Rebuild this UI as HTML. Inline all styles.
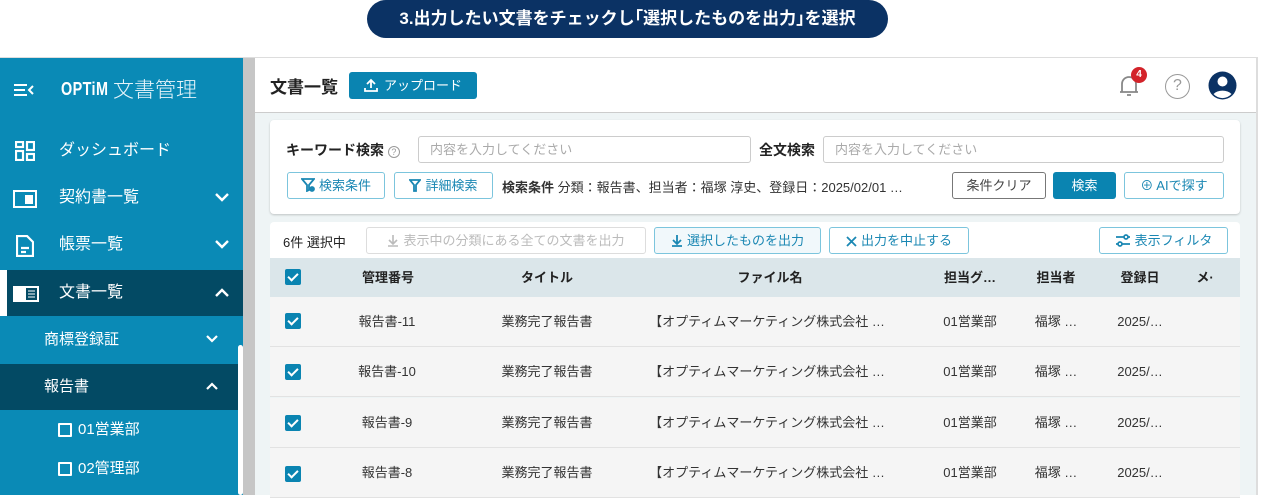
<!DOCTYPE html>
<html><head><meta charset="utf-8"><style>
*{box-sizing:border-box;margin:0;padding:0}
body{width:1261px;height:495px;overflow:hidden;background:#fff;font-family:"Liberation Sans","Noto Sans CJK JP",sans-serif;position:relative;color:#222}
.abs{position:absolute}
.banner{left:367px;top:0;width:521px;height:38px;background:#0b3264;border-radius:19px;color:#fff;font-size:17px;font-weight:bold;text-align:center;line-height:38px}
.frame{left:0;top:57px;width:1258px;height:438px;border-top:1px solid #ddd;border-right:2px solid #ddd;background:#eef4f5}
.side{left:0;top:58px;width:243px;height:437px;background:#0a8ab6;color:#fff}
.sb{left:243px;top:58px;width:12px;height:437px;background:#c6c6c6}
.thumb{left:238px;top:345px;width:5px;height:150px;background:#fff;border-radius:3px}
.nav{position:absolute;left:0;width:243px;height:46px;font-size:16px;line-height:46px}
.nav .t{position:absolute;left:59px}
.chev{position:absolute;right:14px;top:18px}
.hdr{left:255px;top:58px;width:1001px;height:55px;background:#fff;border-bottom:1px solid #ccc}
.btn{position:absolute;border:1px solid #7cc5dd;border-radius:3px;background:#fff;color:#1a87b3;font-size:13px;text-align:center;white-space:nowrap}
.btn svg{vertical-align:-2px;margin-right:4px}
.card{background:#fff;border-radius:4px;box-shadow:0 1px 2px rgba(0,0,0,.2)}
.inp{position:absolute;border:1px solid #ccc;border-radius:3px;height:27px;color:#aaa;font-size:13px;line-height:25px;padding-left:11px;background:#fff}
.row{position:absolute;left:270px;width:970px;height:50px;background:#f5f5f5;border-bottom:1px solid #e2e2e2;font-size:13px;color:#333}
.row span,.th span{position:absolute;transform:translateX(-50%);white-space:nowrap}
.cb{position:absolute;left:285px;width:16px;height:16px;background:#0a84b1;border-radius:2px}
.cb:after{content:"";position:absolute;left:5px;top:2px;width:4px;height:8px;border:solid #fff;border-width:0 2px 2px 0;transform:rotate(45deg)}
</style></head><body>
<div class="abs banner">3.出力したい文書をチェックし｢選択したものを出力｣を選択</div>
<div class="abs frame"></div>
<div class="abs side">
 <svg class="abs" style="left:14px;top:26px" width="20" height="12" viewBox="0 0 20 12" fill="none" stroke="#fff" stroke-width="2"><path d="M0 1h13M0 6h11M0 11h13M19 2l-4 4 4 4"/></svg>
 <div class="abs" style="left:61px;top:21px;font-size:18px;font-weight:bold;transform:scaleX(.8);transform-origin:left;letter-spacing:0.5px">OPTiM</div>
 <div class="abs" style="left:113px;top:16px;font-size:21px;font-weight:300;color:#e6f4fa">文書管理</div>
 <div class="nav" style="top:70px"><svg class="abs" style="left:15px;top:13px" width="20" height="20" viewBox="0 0 20 20" fill="none" stroke="#fff" stroke-width="2.2"><rect x="1" y="1" width="7" height="5"/><rect x="12" y="1" width="7" height="8"/><rect x="1" y="10" width="7" height="9"/><rect x="12" y="13" width="7" height="6"/></svg><span class="t">ダッシュボード</span></div>
 <div class="nav" style="top:117px"><svg class="abs" style="left:13px;top:15px" width="24" height="18" viewBox="0 0 24 18"><rect x="1" y="1" width="22" height="16" fill="none" stroke="#fff" stroke-width="2"/><rect x="12" y="5" width="8" height="9" fill="#fff"/></svg><span class="t">契約書一覧</span><svg class="chev" width="14" height="9" viewBox="0 0 14 9" fill="none" stroke="#fff" stroke-width="2.4"><path d="M1 1l6 6 6-6"/></svg></div>
 <div class="nav" style="top:164px"><svg class="abs" style="left:16px;top:13px" width="18" height="22" viewBox="0 0 18 22" fill="none" stroke="#fff" stroke-width="2.2"><path d="M1 1h10l6 6v14H1z"/><path d="M5 13h8M5 17h5"/></svg><span class="t">帳票一覧</span><svg class="chev" width="14" height="9" viewBox="0 0 14 9" fill="none" stroke="#fff" stroke-width="2.4"><path d="M1 1l6 6 6-6"/></svg></div>
 <div class="nav" style="top:212px;background:#034a64;border-left:7px solid #fff"><svg class="abs" style="left:5px;top:15px" width="28" height="18" viewBox="0 0 28 18"><rect x="1" y="1" width="26" height="16" fill="#fff"/><rect x="14" y="3" width="11" height="12" fill="#034a64"/><path d="M16 6h7M16 9h7M16 12h7" stroke="#fff"/></svg><span class="t" style="left:52px">文書一覧</span><svg class="chev" width="14" height="9" viewBox="0 0 14 9" fill="none" stroke="#fff" stroke-width="2.4"><path d="M1 8l6-6 6 6"/></svg></div>
 <div class="nav" style="top:259px;font-size:15px"><span class="t" style="left:44px">商標登録証</span><svg class="chev" style="right:25px" width="12" height="8" viewBox="0 0 12 8" fill="none" stroke="#fff" stroke-width="2.2"><path d="M1 1l5 5 5-5"/></svg></div>
 <div class="nav" style="top:306px;font-size:15px;background:#034a64;width:238px"><span class="t" style="left:44px">報告書</span><svg class="chev" style="right:20px" width="12" height="8" viewBox="0 0 12 8" fill="none" stroke="#fff" stroke-width="2.2"><path d="M1 7l5-5 5 5"/></svg></div>
 <div class="nav" style="top:349px;font-size:15px"><span class="abs" style="left:58px;top:16px;width:14px;height:14px;border:2px solid #fff;border-radius:1px"></span><span class="t" style="left:78px">01営業部</span></div>
 <div class="nav" style="top:388px;font-size:15px"><span class="abs" style="left:58px;top:16px;width:14px;height:14px;border:2px solid #fff;border-radius:1px"></span><span class="t" style="left:78px">02管理部</span></div>
</div>
<div class="abs sb"></div><div class="abs thumb"></div>
<div class="abs hdr">
 <div class="abs" style="left:15px;top:15px;font-size:17px;font-weight:bold">文書一覧</div>
 <div class="abs" style="left:94px;top:14px;width:128px;height:27px;background:#0a84b1;border-radius:3px;color:#fff;font-size:13px;line-height:27px;text-align:center"><svg width="14" height="14" viewBox="0 0 14 14" fill="none" stroke="#fff" stroke-width="1.8" style="vertical-align:-2px;margin-right:6px"><path d="M7 10V2M3 6l4-4 4 4M1 10v3h12v-3"/></svg>アップロード</div>
 <svg class="abs" style="left:863px;top:16px" width="22" height="24" viewBox="0 0 22 24" fill="none" stroke="#888" stroke-width="1.8"><path d="M4 18V10a7 7 0 0114 0v8zM2 18h18M9 21h4"/></svg>
 <div class="abs" style="left:876px;top:9px;width:16px;height:16px;border-radius:8px;background:#d3232a;color:#fff;font-size:10px;text-align:center;line-height:16px;font-weight:bold">4</div>
 <div class="abs" style="left:910px;top:16px;width:25px;height:25px;border:1.5px solid #999;border-radius:50%;color:#999;font-size:16px;text-align:center;line-height:22px">?</div>
 <svg class="abs" style="left:953px;top:13px" width="29" height="29" viewBox="0 0 29 29"><circle cx="14.5" cy="14.5" r="14" fill="#0b3264"/><circle cx="14.5" cy="10.5" r="5" fill="#fff"/><path d="M5.5 23a11 8 0 0118 0a12 12 0 01-18 0z" fill="#fff"/></svg>
</div>
<div class="abs card" style="left:270px;top:120px;width:970px;height:94px">
 <div class="abs" style="left:16px;top:20px;font-size:14px;font-weight:bold">キーワード検索 <span style="display:inline-block;width:12px;height:12px;border:1px solid #999;border-radius:50%;color:#999;font-weight:normal;font-size:9px;line-height:10px;text-align:center;vertical-align:0">?</span></div>
 <div class="inp" style="left:148px;top:16px;width:333px">内容を入力してください</div>
 <div class="abs" style="left:489px;top:20px;font-size:14px;font-weight:bold">全文検索</div>
 <div class="inp" style="left:553px;top:16px;width:401px">内容を入力してください</div>
 <div class="btn" style="left:17px;top:52px;width:98px;height:27px;line-height:25px"><svg width="14" height="14" viewBox="0 0 14 14" fill="none" stroke="#1a87b3" stroke-width="1.8"><path d="M1 1h12L8 7v5L6 13V7z"/><circle cx="11" cy="11" r="2" fill="#1a87b3"/></svg>検索条件</div>
 <div class="btn" style="left:124px;top:52px;width:99px;height:27px;line-height:25px"><svg width="12" height="13" viewBox="0 0 12 13" fill="none" stroke="#1a87b3" stroke-width="1.8"><path d="M1 1h10L7 6v6L5 12V6z"/></svg>詳細検索</div>
 <div class="abs" style="left:232px;top:57px;font-size:13px;color:#333;white-space:nowrap"><b>検索条件</b> 分類：報告書、担当者：福塚 淳史、登録日：2025/02/01 …</div>
 <div class="btn" style="left:682px;top:52px;width:94px;height:27px;line-height:25px;border:1.5px solid #777;color:#444">条件クリア</div>
 <div class="btn" style="left:783px;top:52px;width:63px;height:27px;line-height:27px;border:0;background:#0a84b1;color:#fff">検索</div>
 <div class="btn" style="left:854px;top:52px;width:100px;height:27px;line-height:25px">⊕ AIで探す</div>
</div>
<div class="abs" style="left:270px;top:222px;width:970px;height:36px;background:#fff;border-radius:4px 4px 0 0">
 <div class="abs" style="left:13px;top:10px;font-size:13px">6件 選択中</div>
 <div class="btn" style="left:96px;top:5px;width:280px;height:27px;line-height:25px;border-color:#ddd;color:#bbb"><svg width="12" height="13" viewBox="0 0 12 13" fill="none" stroke="#bbb" stroke-width="1.6"><path d="M6 1v8M2 6l4 4 4-4M1 12h10"/></svg>表示中の分類にある全ての文書を出力</div>
 <div class="btn" style="left:384px;top:5px;width:167px;height:27px;line-height:25px;background:#f1f8fb"><svg width="12" height="13" viewBox="0 0 12 13" fill="none" stroke="#1a87b3" stroke-width="1.8"><path d="M6 1v8M2 6l4 4 4-4M1 12h10"/></svg>選択したものを出力</div>
 <div class="btn" style="left:559px;top:5px;width:140px;height:27px;line-height:25px"><svg width="11" height="11" viewBox="0 0 11 11" fill="none" stroke="#1a87b3" stroke-width="1.8"><path d="M1 1l9 9M10 1l-9 9"/></svg>出力を中止する</div>
 <div class="btn" style="left:829px;top:5px;width:129px;height:27px;line-height:25px"><svg width="16" height="13" viewBox="0 0 16 13" fill="none" stroke="#1a87b3" stroke-width="1.7"><path d="M1 3h8M13 3h2M1 10h2M7 10h8"/><circle cx="11" cy="3" r="2"/><circle cx="5" cy="10" r="2"/></svg>表示フィルタ</div>
</div>
<div class="abs th" style="left:270px;top:258px;width:970px;height:39px;background:#dbe6ea;font-size:13px;font-weight:bold;line-height:39px">
 <span style="left:118px">管理番号</span><span style="left:277px">タイトル</span><span style="left:500px">ファイル名</span><span style="left:700px">担当グ…</span><span style="left:786px">担当者</span><span style="left:870px">登録日</span><span style="left:935px">メ·</span>
</div>
<div class="cb" style="top:269px"></div>
<div class="row" style="top:297px;line-height:50px"><span style="left:117px">報告書-11</span><span style="left:277px">業務完了報告書</span><span style="left:497px">【オプティムマーケティング株式会社 …</span><span style="left:700px">01営業部</span><span style="left:786px">福塚 …</span><span style="left:870px">2025/…</span></div>
<div class="row" style="top:347px;line-height:50px"><span style="left:117px">報告書-10</span><span style="left:277px">業務完了報告書</span><span style="left:497px">【オプティムマーケティング株式会社 …</span><span style="left:700px">01営業部</span><span style="left:786px">福塚 …</span><span style="left:870px">2025/…</span></div>
<div class="row" style="top:398px;line-height:50px"><span style="left:117px">報告書-9</span><span style="left:277px">業務完了報告書</span><span style="left:497px">【オプティムマーケティング株式会社 …</span><span style="left:700px">01営業部</span><span style="left:786px">福塚 …</span><span style="left:870px">2025/…</span></div>
<div class="row" style="top:448px;line-height:50px"><span style="left:117px">報告書-8</span><span style="left:277px">業務完了報告書</span><span style="left:497px">【オプティムマーケティング株式会社 …</span><span style="left:700px">01営業部</span><span style="left:786px">福塚 …</span><span style="left:870px">2025/…</span></div>
<div class="cb" style="top:313px"></div><div class="cb" style="top:364px"></div><div class="cb" style="top:415px"></div><div class="cb" style="top:466px"></div>
</body></html>
